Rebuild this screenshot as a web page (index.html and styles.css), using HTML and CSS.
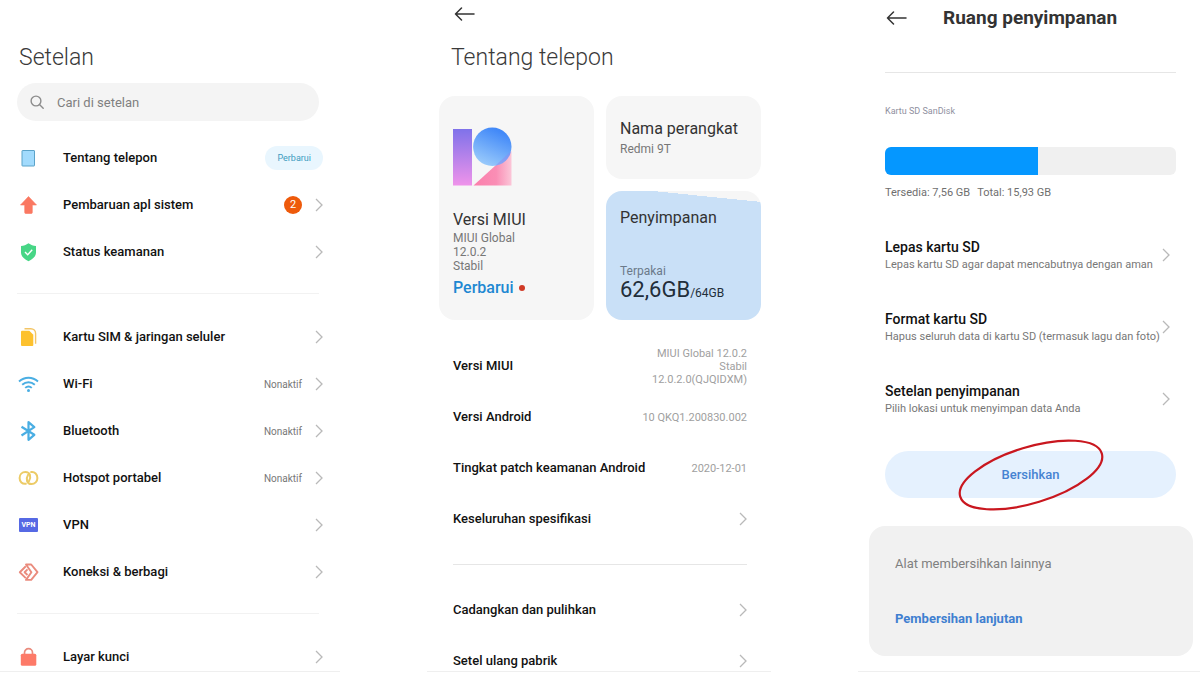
FILE: index.html
```html
<!DOCTYPE html>
<html lang="id">
<head>
<meta charset="utf-8">
<meta name="viewport" content="width=device-width, initial-scale=1">
<title>Setelan</title>
<link rel="stylesheet" href="styles.css">
</head>
<body>
<svg class="defs" aria-hidden="true">
  <symbol id="chevron" viewBox="0 0 8 14"><path d="M1 1l6 6-6 6" fill="none" stroke="#b9b9b9" stroke-width="1.3"/></symbol>
  <symbol id="back" viewBox="0 0 21 14"><path d="M20 7H1.500M7.500 1L1.500 7l6 6" fill="none" stroke="#333" stroke-width="1.500" stroke-linecap="round" stroke-linejoin="round"/></symbol>
</svg>
<main class="screens">
  <section class="screen settings">
    <h1 class="title">Setelan</h1>
    <label class="search">
      <svg class="search-icon" viewBox="0 0 14 14"><circle cx="6" cy="6" r="4.900" fill="none" stroke="#8c8c8c" stroke-width="1.400"/><path d="M9.500 9.500l3.700 3.700" stroke="#8c8c8c" stroke-width="1.400" stroke-linecap="round"/></svg>
      <input class="search-input" type="search" placeholder="Cari di setelan" aria-label="Cari di setelan">
    </label>
    <nav class="list settings-list">
      <a class="row" href="#tentang">
        <svg class="icon" viewBox="0 0 23 23"><rect x="5" y="3.500" width="12.500" height="15.500" rx=".5" fill="#a2dbfd" stroke="#5ba3c9"/></svg>
        <span class="name">Tentang telepon</span><span class="pill">Perbarui</span>
      </a>
      <a class="row" href="#pembaruan">
        <svg class="icon" viewBox="0 0 23 23"><path d="M11.500 2.500l8 8.500h-4.200v7.500a1 1 0 0 1-1 1H8.700a1 1 0 0 1-1-1V11H3.500z" fill="#fa7862" stroke="#fa7862" stroke-width=".6" stroke-linejoin="round"/></svg>
        <span class="name">Pembaruan apl sistem</span><span class="badge">2</span><svg class="chevron"><use href="#chevron"/></svg>
      </a>
      <a class="row" href="#keamanan">
        <svg class="icon" viewBox="0 0 23 23"><path d="M11.500 2.300c2.300 1.700 4.700 2.500 7.500 2.800v6.400c0 4-3.200 6.500-7.500 8.700C7.200 18 4 15.500 4 11.500V5.100c2.800-.3 5.200-1.100 7.500-2.800z" fill="#47d686"/><path d="M8 11l2.700 2.700 4.500-4.900" fill="none" stroke="#fff" stroke-width="1.400"/></svg>
        <span class="name">Status keamanan</span><svg class="chevron"><use href="#chevron"/></svg>
      </a>
      <hr class="divider">
      <a class="row" href="#sim">
        <svg class="icon" viewBox="0 0 23 23"><path d="M7.500 2.700h6.300c2.800 0 4.800 2 4.800 4.800v10.300" fill="none" stroke="#f3c566" stroke-width="1.400"/><path d="M5 4.800h7.300l4 4V19a1 1 0 0 1-1 1H5a1 1 0 0 1-1-1V5.800a1 1 0 0 1 1-1z" fill="#fdc12e"/></svg>
        <span class="name">Kartu SIM &amp; jaringan seluler</span><svg class="chevron"><use href="#chevron"/></svg>
      </a>
      <a class="row" href="#wifi">
        <svg class="icon" viewBox="0 0 23 23"><g fill="none" stroke="#4aaee3" stroke-width="1.900"><path d="M2 8.500c5.500-5 13.500-5 19 0"/><path d="M5.200 11.800c3.700-3.400 8.900-3.400 12.600 0"/><path d="M8.200 14.900c2-1.800 4.600-1.800 6.600 0"/></g><circle cx="11.500" cy="17.600" r="1.500" fill="#4aaee3"/></svg>
        <span class="name">Wi-Fi</span><span class="state">Nonaktif</span><svg class="chevron"><use href="#chevron"/></svg>
      </a>
      <a class="row" href="#bluetooth">
        <svg class="icon" viewBox="0 0 23 23"><path d="M4.500 6.800l12.800 8-5.800 5V2.200l5.800 5-12.800 8.300" fill="none" stroke="#4aaee3" stroke-width="2.200" stroke-linejoin="round"/></svg>
        <span class="name">Bluetooth</span><span class="state">Nonaktif</span><svg class="chevron"><use href="#chevron"/></svg>
      </a>
      <a class="row" href="#hotspot">
        <svg class="icon" viewBox="0 0 23 23"><g fill="none" stroke="#eccb66" stroke-width="2" stroke-linecap="round"><path d="M8.800 16.800C5.200 17.300 2.600 14.600 2.600 11S5.200 4.900 8.400 4.900c4.700 0 6.200 4.900 3.500 9.400"/><path d="M14.200 5.100c3.600-.5 6.200 2.200 6.200 5.800s-2.600 6.200-5.800 6.200c-4.700 0-6.200-4.900-3.500-9.400"/></g></svg>
        <span class="name">Hotspot portabel</span><span class="state">Nonaktif</span><svg class="chevron"><use href="#chevron"/></svg>
      </a>
      <a class="row" href="#vpn">
        <span class="icon vpn" aria-hidden="true">VPN</span>
        <span class="name">VPN</span><svg class="chevron"><use href="#chevron"/></svg>
      </a>
      <a class="row" href="#koneksi">
        <svg class="icon" viewBox="0 0 23 23"><g fill="none" stroke="#ea8b7d" stroke-width="1.900" stroke-linejoin="round"><path d="M9 3.500h5.200l6.300 7.700-6.300 7.700H9l5.400-7.700z"/><path d="M8.800 5.300l-6 5.900 6 5.900"/><path d="M10.500 8.400l-2.900 2.800 2.900 2.800"/></g></svg>
        <span class="name">Koneksi &amp; berbagi</span><svg class="chevron"><use href="#chevron"/></svg>
      </a>
      <hr class="divider">
      <a class="row" href="#kunci">
        <svg class="icon" viewBox="0 0 23 23"><path d="M7.500 9V6.700a4 4 0 0 1 8 0V9" fill="none" stroke="#ea8b7d" stroke-width="1.700"/><rect x="3.800" y="7.800" width="15.500" height="12" rx="1.500" fill="#fd7a68"/></svg>
        <span class="name">Layar kunci</span><svg class="chevron"><use href="#chevron"/></svg>
      </a>
    </nav>
  </section>

  <section class="screen about" id="tentang">
    <button class="back" type="button" aria-label="Kembali"><svg class="back-icon"><use href="#back"/></svg></button>
    <h1 class="title">Tentang telepon</h1>
    <div class="cards">
      <article class="card version">
        <svg class="logo" viewBox="0 0 60 60" role="img" aria-label="MIUI 12">
          <defs>
            <linearGradient id="bar" x2="0" y2="1"><stop stop-color="#7f72ea"/><stop offset="1" stop-color="#ef93ea"/></linearGradient>
            <linearGradient id="disc" x1=".7" y1=".1" x2=".3" y2="1"><stop stop-color="#4289f8"/><stop offset="1" stop-color="#9cccfb"/></linearGradient>
            <linearGradient id="foot"><stop stop-color="#fb7fac"/><stop offset=".6" stop-color="#fa8eb5"/><stop offset="1" stop-color="#fbc6d8"/></linearGradient>
            <clipPath id="foot-shape"><path d="M20.500 58.500L58.500 24v34.500z"/></clipPath>
          </defs>
          <path d="M0 2h19v56.500H0z" fill="url(#bar)"/>
          <path d="M20.500 58.500L58.500 24v34.500z" fill="url(#foot)"/>
          <circle cx="39.300" cy="19.800" r="19.200" fill="url(#disc)"/>
          <circle cx="39.300" cy="19.800" r="19.200" fill="#8b8af0" opacity=".5" clip-path="url(#foot-shape)"/>
        </svg>
        <h2 class="card-title">Versi MIUI</h2>
        <p class="card-text">MIUI Global<br>12.0.2<br>Stabil</p>
        <a class="update" href="#perbarui">Perbarui</a>
      </article>
      <article class="card device">
        <h2 class="card-title">Nama perangkat</h2>
        <p class="card-text">Redmi 9T</p>
      </article>
      <article class="card storage">
        <h2 class="card-title">Penyimpanan</h2>
        <p class="card-text used">Terpakai</p>
        <p class="amount">62,6GB<span class="total">/64GB</span></p>
      </article>
    </div>
    <div class="list about-list">
      <div class="row"><span class="name">Versi MIUI</span><span class="value">MIUI Global 12.0.2<br>Stabil<br>12.0.2.0(QJQIDXM)</span></div>
      <div class="row"><span class="name">Versi Android</span><span class="value">10 QKQ1.200830.002</span></div>
      <div class="row"><span class="name">Tingkat patch keamanan Android</span><span class="value">2020-12-01</span></div>
      <a class="row" href="#spesifikasi"><span class="name">Keseluruhan spesifikasi</span><svg class="chevron"><use href="#chevron"/></svg></a>
      <hr class="divider">
      <a class="row" href="#cadangkan"><span class="name">Cadangkan dan pulihkan</span><svg class="chevron"><use href="#chevron"/></svg></a>
      <a class="row" href="#setel-ulang"><span class="name">Setel ulang pabrik</span><svg class="chevron"><use href="#chevron"/></svg></a>
    </div>
  </section>

  <section class="screen space">
    <header class="bar">
      <button class="back" type="button" aria-label="Kembali"><svg class="back-icon"><use href="#back"/></svg></button>
      <h1 class="bar-title">Ruang penyimpanan</h1>
    </header>
    <div class="space-body">
      <hr class="divider">
      <p class="caption">Kartu SD SanDisk</p>
      <div class="meter" role="progressbar" aria-label="Kartu SD SanDisk" aria-valuenow="53" aria-valuemin="0" aria-valuemax="100"><div class="meter-fill" style="width: 52.5%"></div></div>
      <p class="figures"><span>Tersedia: 7,56 GB</span><span>Total: 15,93 GB</span></p>
      <nav class="list space-list">
        <a class="row" href="#lepas"><span class="entry"><span class="entry-name">Lepas kartu SD</span><span class="hint">Lepas kartu SD agar dapat mencabutnya dengan aman</span></span><svg class="chevron"><use href="#chevron"/></svg></a>
        <a class="row" href="#format"><span class="entry"><span class="entry-name">Format kartu SD</span><span class="hint">Hapus seluruh data di kartu SD (termasuk lagu dan foto)</span></span><svg class="chevron"><use href="#chevron"/></svg></a>
        <a class="row" href="#lokasi"><span class="entry"><span class="entry-name">Setelan penyimpanan</span><span class="hint">Pilih lokasi untuk menyimpan data Anda</span></span><svg class="chevron"><use href="#chevron"/></svg></a>
      </nav>
      <div class="clean-wrap">
        <button class="clean" type="button">Bersihkan</button>
        <svg class="ring" viewBox="0 0 150 76" aria-hidden="true"><ellipse cx="75" cy="38" rx="74" ry="28" transform="rotate(-17 75 38)" fill="none" stroke="#c9171f" stroke-width="2.200"/></svg>
      </div>
    </div>
    <aside class="tools">
      <h2 class="tools-title">Alat membersihkan lainnya</h2>
      <a class="tools-link" href="#lanjutan">Pembersihan lanjutan</a>
    </aside>
  </section>
</main>
</body>
</html>
```

FILE: styles.css
```css
* {
  box-sizing: border-box;
}

body {
  margin: 0;
  background: #fff;
  color: #111;
  font-family: Roboto, "Liberation Sans", sans-serif;
  font-size: 13px;
}

h1, h2, p {
  margin: 0;
  font-weight: 400;
}

a {
  color: inherit;
  text-decoration: none;
}

button {
  border: 0;
  padding: 0;
  background: none;
  font: inherit;
  cursor: pointer;
}

.defs {
  display: none;
}

.screens {
  display: grid;
  grid-template-columns: 340fr 344fr 342fr;
  column-gap: 87px;
}

.screen {
  border-bottom: 1px solid #efefef;
}

.title {
  font-size: 23px;
  font-weight: 300;
  line-height: 32px;
  color: #3a3a3a;
}

/* Shared list rows */
.list {
  display: flex;
  flex-direction: column;
}

.row {
  display: flex;
  align-items: center;
}

.name {
  flex: 1;
  font-weight: 500;
  line-height: 20px;
}

.chevron {
  flex: none;
  width: 8px;
  height: 14px;
}

.divider {
  width: 100%;
  height: 1px;
  margin: 0;
  border: 0;
  background: #e6e6e6;
}

.back {
  display: block;
}

.back-icon {
  display: block;
  width: 21px;
  height: 14px;
}

/* Settings */
.settings {
  padding: 42px 17px 2px 17px;
}

.settings .title {
  padding-left: 2px;
}

.search {
  display: flex;
  align-items: center;
  gap: 13px;
  height: 38px;
  margin: 9px 4px 25px 0;
  padding: 0 13px;
  border-radius: 19px;
  background: #f4f4f4;
}

.search-icon {
  flex: none;
  width: 14px;
  height: 14px;
}

.search-input {
  flex: 1;
  min-width: 0;
  padding: 0;
  border: 0;
  outline: 0;
  background: none;
  font: inherit;
  color: #333;
}

.search-input::placeholder {
  color: #808080;
}

.settings-list {
  gap: 23px;
}

.settings-list .row {
  min-height: 24px;
}

.settings-list .divider {
  width: auto;
  margin: 6px 4px 8px 0;
  background: #f2f2f2;
}

.icon {
  flex: none;
  width: 23px;
  height: 23px;
  margin-right: 23px;
}

.vpn {
  width: 19px;
  height: 14px;
  margin: 0 25px 0 2px;
  border-radius: 1px;
  background: #5669e4;
  color: #fff;
  font-size: 7px;
  font-weight: 700;
  line-height: 14px;
  text-align: center;
}

.pill {
  padding: 0 12px;
  border-radius: 12px;
  background: #e9f6fe;
  color: #3d9cc0;
  font-size: 9px;
  line-height: 24px;
}

.badge {
  width: 18px;
  height: 18px;
  margin-right: 13px;
  border-radius: 50%;
  background: #ee5a0b;
  color: #fff;
  font-size: 11px;
  line-height: 18px;
  text-align: center;
}

.state {
  margin-right: 13px;
  color: #777;
  font-size: 10px;
}

/* About phone */
.about {
  padding: 7px 10px 0 12px;
}

.about .back {
  margin-left: 15px;
}

.about .title {
  margin-top: 21px;
  padding-left: 12px;
}

.cards {
  display: grid;
  grid-template-columns: 1fr 1fr;
  gap: 12px;
  margin-top: 22px;
}

.card {
  padding: 22px 14px;
  border-radius: 16px;
  background: #f6f6f6;
}

.card-title {
  color: #333;
  font-size: 16px;
  line-height: 22px;
}

.card-text {
  color: #777;
  font-size: 12px;
  line-height: 14px;
}

.version {
  grid-row: span 2;
  padding: 31px 14px 20px;
}

.logo {
  display: block;
  width: 60px;
  height: 60px;
  margin-bottom: 22px;
}

.update {
  display: flex;
  align-items: center;
  gap: 5px;
  margin-top: 4px;
  color: #1e88d2;
  font-size: 16px;
  font-weight: 500;
  line-height: 22px;
}

.update::after {
  width: 6px;
  height: 6px;
  border-radius: 50%;
  background: #d03a26;
  content: "";
}

.device .card-text {
  margin-top: 2px;
  padding-bottom: 1px;
}

.storage {
  padding: 16px 14px 18px;
  background: linear-gradient(#c9e0f7, #c9e0f7) bottom / 100% calc(100% - 11px) no-repeat, linear-gradient(#c9e0f7, #c9e0f7) left top / 31% 11px no-repeat, linear-gradient(to bottom left, #f6f6f6 50%, #c9e0f7 50%) right top / 70% 11px no-repeat;
}

.used {
  margin-top: 35px;
  color: #6b7a8a;
}

.amount {
  color: #222e3a;
  font-size: 22px;
  line-height: 24px;
}

.total {
  font-size: 12px;
  line-height: 12px;
}

.about-list {
  gap: 31px;
  margin: 36px 14px 0;
}

.about-list .row {
  min-height: 20px;
}

.about-list .divider {
  margin: 4px 0;
}

.value {
  margin: -10px 0;
  color: #a0a0a0;
  font-size: 11px;
  line-height: 13px;
  text-align: right;
}

/* Storage space */
.bar {
  display: flex;
  align-items: center;
  gap: 36px;
  padding: 6px 28px 0;
}

.bar-title {
  color: #333;
  font-size: 19px;
  font-weight: 700;
  line-height: 24px;
}

.space-body {
  padding: 42px 24px 0 27px;
}

.caption {
  margin-top: 31px;
  color: #9090a0;
  font-size: 9px;
  line-height: 14px;
}

.meter {
  height: 28px;
  margin-top: 29px;
  overflow: hidden;
  border-radius: 6px;
  background: #f0f0f0;
}

.meter-fill {
  height: 100%;
  background: #0597ff;
}

.figures {
  display: flex;
  gap: 7px;
  margin-top: 11px;
  color: #6f6f6f;
  font-size: 11px;
  line-height: 14px;
}

.space-list {
  gap: 36px;
  margin: 37px 6px 0 0;
}

.space-list .row {
  justify-content: space-between;
}

.entry {
  display: flex;
  flex-direction: column;
}

.entry-name {
  font-size: 14px;
  font-weight: 500;
  line-height: 20px;
}

.hint {
  color: #777;
  font-size: 11px;
  line-height: 16px;
}

.clean-wrap {
  position: relative;
  margin-top: 34px;
}

.clean {
  display: block;
  width: 100%;
  height: 47px;
  border-radius: 24px;
  background: #e5f1fe;
  color: #4583d2;
  font-weight: 500;
}

/* Highlight ring over the button */
.ring {
  position: absolute;
  top: 50%;
  left: 50%;
  width: 150px;
  height: 76px;
  transform: translate(-50%, -50%);
  pointer-events: none;
}

.tools {
  margin: 28px 7px 14px 11px;
  padding: 28px 26px 27px;
  border-radius: 16px;
  background: #f1f1f1;
}

.tools-title {
  color: #808080;
  font-size: 13px;
  line-height: 20px;
}

.tools-link {
  display: inline-block;
  margin-top: 35px;
  color: #3f7fd0;
  font-weight: 700;
  line-height: 20px;
}
```
